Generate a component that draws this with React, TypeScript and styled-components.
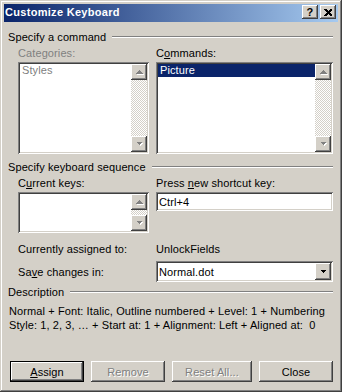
import React from "react";
import styled, { createGlobalStyle, css } from "styled-components";

const FACE = "#d4d0c8";
const SHADOW = "#808080";
const DARK = "#404040";

const Global = createGlobalStyle`
  html, body { margin: 0; padding: 0; background: ${FACE}; }
  body { font-family: "Liberation Sans", Arial, sans-serif; font-size: 11px; }
`;

const raised = css`
  box-shadow: inset -1px -1px ${DARK}, inset 1px 1px #fff, inset -2px -2px ${SHADOW}, inset 2px 2px ${FACE};
`;
const sunken = css`
  box-shadow: inset 1px 1px ${SHADOW}, inset -1px -1px #fff, inset 2px 2px ${DARK}, inset -2px -2px ${FACE};
`;

const Window = styled.div`
  width: 342px;
  height: 392px;
  box-sizing: border-box;
  padding: 4px;
  background: ${FACE};
  box-shadow: inset -1px -1px ${DARK}, inset 1px 1px ${FACE}, inset -2px -2px ${SHADOW}, inset 2px 2px #fff;
  display: flex;
  flex-direction: column;
  color: #000;
  letter-spacing: 0.1px;
`;

const TitleBar = styled.div`
  height: 18px;
  flex: none;
  display: flex;
  align-items: flex-start;
  padding: 0 2px 0 1px;
  background: linear-gradient(to right, #0a246a, #a6caf0);
`;

const TitleText = styled.div`
  flex: 1;
  color: #fff;
  font-weight: bold;
  letter-spacing: 0.3px;
  line-height: 17px;
  white-space: nowrap;
`;

const CaptionButton = styled.div`
  width: 16px;
  height: 14px;
  margin-top: 1px;
  margin-left: 2px;
  background: ${FACE};
  ${raised};
  display: flex;
  align-items: center;
  justify-content: center;
  font-weight: bold;
  font-size: 11px;
  line-height: 14px;
`;

const Body = styled.div`
  flex: 1;
  display: flex;
  flex-direction: column;
  padding: 0 5px 0 4px;
`;

const GroupHeader = styled.div<{ $top: number }>`
  margin-top: ${(p) => p.$top}px;
  height: 14px;
  line-height: 14px;
  display: flex;
  align-items: center;
  white-space: nowrap;
`;

const EtchedLine = styled.div`
  flex: 1;
  margin-left: 6px;
  height: 0;
  border-top: 1px solid ${SHADOW};
  border-bottom: 1px solid #fff;
`;

const Columns = styled.div<{ $top: number; $align?: string }>`
  margin-top: ${(p) => p.$top}px;
  padding-left: 10px;
  display: grid;
  grid-template-columns: 131px 177px;
  column-gap: 7px;
  align-items: ${(p) => p.$align || "start"};
`;

const Label = styled.div<{ $disabled?: boolean }>`
  line-height: 14px;
  height: 14px;
  white-space: nowrap;
  color: ${(p) => (p.$disabled ? SHADOW : "#000")};
`;

const Key = styled.span`
  text-decoration: underline;
`;

const ListBox = styled.div<{ $h: number }>`
  height: ${(p) => p.$h}px;
  box-sizing: border-box;
  padding: 2px;
  background: #fff;
  ${sunken};
  display: flex;
`;

const ListItems = styled.div`
  flex: 1;
  min-width: 0;
  display: flex;
  flex-direction: column;
`;

const ListItem = styled.div<{ $selected?: boolean; $disabled?: boolean }>`
  height: 13px;
  line-height: 13px;
  padding-left: 2px;
  white-space: nowrap;
  background: ${(p) => (p.$selected ? "#0a246a" : "transparent")};
  color: ${(p) => (p.$selected ? "#fff" : p.$disabled ? SHADOW : "#000")};
`;

const ScrollBar = styled.div`
  width: 16px;
  flex: none;
  display: flex;
  flex-direction: column;
`;

const ScrollTrack = styled.div`
  flex: 1;
  background: repeating-conic-gradient(${FACE} 0 25%, #fff 0 50%) 0 0 / 2px 2px;
`;

const ArrowButton = styled.div<{ $h?: number }>`
  width: 16px;
  height: ${(p) => p.$h || 16}px;
  flex: none;
  box-sizing: border-box;
  background: ${FACE};
  ${raised};
  display: flex;
  align-items: center;
  justify-content: center;
`;

const Field = styled.div<{ $h: number }>`
  height: ${(p) => p.$h}px;
  box-sizing: border-box;
  padding: 2px;
  background: #fff;
  ${sunken};
  display: flex;
  align-items: center;
`;

const FieldText = styled.div`
  flex: 1;
  padding-left: 1px;
  white-space: nowrap;
  line-height: 14px;
`;

const DescText = styled.div`
  margin-top: 5px;
  padding-left: 1px;
  line-height: 14px;
`;

const DescLine = styled.div`
  white-space: pre;
  height: 14px;
`;

const ButtonRow = styled.div`
  margin-top: 29px;
  padding-left: 2px;
  display: flex;
  gap: 7px;
`;

const PushButton = styled.div<{ $w: number; $default?: boolean; $disabled?: boolean }>`
  width: ${(p) => p.$w}px;
  height: 21px;
  box-sizing: border-box;
  background: ${FACE};
  display: flex;
  align-items: center;
  justify-content: center;
  white-space: nowrap;
  color: ${(p) => (p.$disabled ? SHADOW : "#000")};
  text-shadow: ${(p) => (p.$disabled ? "1px 1px #fff" : "none")};
  ${(p) =>
    p.$default
      ? css`
          border: 1px solid #000;
          ${raised};
        `
      : raised};
`;

const Arrow = ({ dir, disabled }: { dir: "up" | "down"; disabled?: boolean }) => {
  const pts = dir === "up" ? "0.5,4.5 7.5,4.5 4,1" : "0.5,0.5 7.5,0.5 4,4";
  return (
    <svg width="9" height="6" viewBox="0 0 9 6" shapeRendering="crispEdges">
      {disabled && <polygon points={pts} fill="#fff" transform="translate(1,1)" />}
      <polygon points={pts} fill={disabled ? SHADOW : "#000"} />
    </svg>
  );
};

const Scroll = ({ track = true }: { track?: boolean }) => (
  <ScrollBar>
    <ArrowButton>
      <Arrow dir="up" disabled />
    </ArrowButton>
    {track && <ScrollTrack />}
    <ArrowButton>
      <Arrow dir="down" disabled />
    </ArrowButton>
  </ScrollBar>
);

export default function App() {
  return (
    <>
      <Global />
      <Window>
        <TitleBar>
          <TitleText>Customize Keyboard</TitleText>
          <CaptionButton>?</CaptionButton>
          <CaptionButton>
            <svg width="8" height="7" viewBox="0 0 8 7" shapeRendering="crispEdges">
              <path d="M0.5 0 L7.5 7 M1.5 0 L8.5 7 M7.5 0 L0.5 7 M8.5 0 L1.5 7" stroke="#000" strokeWidth="1" />
            </svg>
          </CaptionButton>
        </TitleBar>
        <Body>
          <GroupHeader $top={8}>
            Specify a command
            <EtchedLine />
          </GroupHeader>
          <Columns $top={2}>
            <Label $disabled>Categories:</Label>
            <Label>
              C<Key>o</Key>mmands:
            </Label>
          </Columns>
          <Columns $top={2}>
            <ListBox $h={92}>
              <ListItems>
                <ListItem $disabled>Styles</ListItem>
              </ListItems>
              <Scroll />
            </ListBox>
            <ListBox $h={92}>
              <ListItems>
                <ListItem $selected>Picture</ListItem>
              </ListItems>
              <Scroll />
            </ListBox>
          </Columns>

          <GroupHeader $top={6}>
            Specify keyboard sequence
            <EtchedLine />
          </GroupHeader>
          <Columns $top={2}>
            <Label>
              C<Key>u</Key>rrent keys:
            </Label>
            <Label>
              Press <Key>n</Key>ew shortcut key:
            </Label>
          </Columns>
          <Columns $top={2}>
            <ListBox $h={41}>
              <ListItems />
              <Scroll />
            </ListBox>
            <Field $h={19}>
              <FieldText>Ctrl+4</FieldText>
            </Field>
          </Columns>

          <Columns $top={9}>
            <Label>Currently assigned to:</Label>
            <Label>UnlockFields</Label>
          </Columns>
          <Columns $top={5} $align="center">
            <Label>
              Sa<Key>v</Key>e changes in:
            </Label>
            <Field $h={21}>
              <FieldText>Normal.dot</FieldText>
              <ArrowButton $h={17}>
                <Arrow dir="down" />
              </ArrowButton>
            </Field>
          </Columns>

          <GroupHeader $top={3}>
            Description
            <EtchedLine />
          </GroupHeader>
          <DescText>
            <DescLine>Normal + Font: Italic, Outline numbered + Level: 1 + Numbering</DescLine>
            <DescLine>Style: 1, 2, 3, … + Start at: 1 + Alignment: Left + Aligned at:  0</DescLine>
          </DescText>

          <ButtonRow>
            <PushButton $w={74} $default>
              <span>
                <Key>A</Key>ssign
              </span>
            </PushButton>
            <PushButton $w={74} $disabled>
              Remove
            </PushButton>
            <PushButton $w={80} $disabled>
              Reset All...
            </PushButton>
            <PushButton $w={74}>Close</PushButton>
          </ButtonRow>
        </Body>
      </Window>
    </>
  );
}
